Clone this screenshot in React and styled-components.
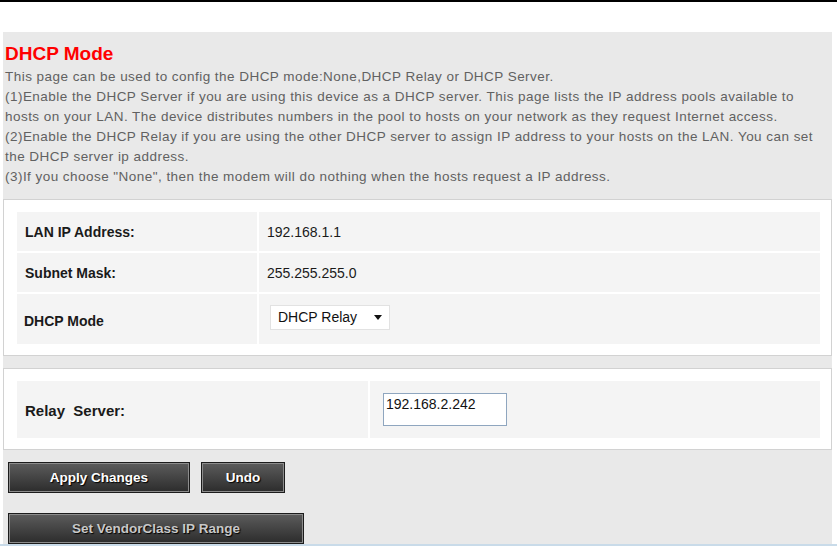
import React from "react";
import styled, { createGlobalStyle } from "styled-components";

const GlobalStyle = createGlobalStyle`
  html, body {
    margin: 0;
    padding: 0;
    background: #fff;
    font-family: "Liberation Sans", Arial, sans-serif;
  }
`;

const Page = styled.div`
  width: 837px;
  height: 546px;
  overflow: hidden;
  border-top: 2px solid #000;
  box-sizing: border-box;
  padding-top: 30px;
  display: flex;
  flex-direction: column;
`;

const Panel = styled.div`
  flex: 1;
  margin-left: 3px;
  width: 829px;
  background: #e9e9e9;
  padding-top: 11px;
  box-sizing: border-box;
`;

const Title = styled.h1`
  margin: 0 0 2px 2px;
  font-size: 19px;
  line-height: 22px;
  font-weight: bold;
  color: #ff0000;
`;

const Description = styled.div`
  margin-left: 2px;
  font-size: 13.5px;
  letter-spacing: 0.46px;
  line-height: 20px;
  color: #616161;
`;

const Box = styled.div`
  margin-top: 12px;
  background: #fff;
  border: 1px solid #d2d2d2;
  padding: 12px 11px 11px 13px;
`;

const Grid = styled.div`
  display: grid;
  grid-template-columns: ${(p) => p.$label}px 1fr;
  gap: 2px;
`;

const Cell = styled.div`
  background: #f4f4f4;
  height: ${(p) => p.$h}px;
  display: flex;
  align-items: center;
  box-sizing: border-box;
  padding-left: ${(p) => p.$pad}px;
  padding-top: ${(p) => p.$shift || 0}px;
  padding-bottom: ${(p) => p.$lift || 0}px;
  font-size: ${(p) => (p.$big ? 15 : 14)}px;
  font-weight: ${(p) => (p.$bold ? "bold" : "normal")};
  color: #1a1a1a;
`;

const Select = styled.div`
  width: 120px;
  height: 25px;
  box-sizing: border-box;
  background: #fff;
  border: 1px solid #e2e2e2;
  display: flex;
  align-items: center;
  justify-content: space-between;
  padding: 0 7px 0 7px;
  font-size: 14px;
  color: #111;
`;

const Arrow = styled.span`
  width: 0;
  height: 0;
  border-left: 4px solid transparent;
  border-right: 4px solid transparent;
  border-top: 5px solid #111;
`;

const TextInput = styled.input`
  width: 124px;
  height: 33px;
  box-sizing: border-box;
  border: 1px solid #8fa6bf;
  padding: 0 2px 12px 2px;
  font-family: "Liberation Sans", Arial, sans-serif;
  font-size: 14px;
  color: #111;
  outline: none;
`;

const ButtonRow = styled.div`
  display: flex;
  gap: 11px;
  margin: ${(p) => p.$top}px 0 0 5px;
`;

const Button = styled.button`
  width: ${(p) => p.$w}px;
  height: 31px;
  border: 1px solid #1c1c1c;
  box-shadow: inset 0 0 0 1px #8c8c8c;
  background: linear-gradient(#5c5c5c, #2c2c2c);
  color: ${(p) => (p.$dim ? "#c8c8c8" : "#fff")};
  font-family: "Liberation Sans", Arial, sans-serif;
  font-size: 13.5px;
  font-weight: bold;
  text-shadow: 1px 1px 1px #000;
  padding: 0 0 1px;
  cursor: pointer;
`;

const BottomLine = styled.div`
  height: 3px;
  background: #c9dbe9;
`;

export default function App() {
  return (
    <>
      <GlobalStyle />
      <Page>
        <Panel>
          <Title>DHCP Mode</Title>
          <Description>
            This page can be used to config the DHCP mode:None,DHCP Relay or DHCP Server.
            <br />
            (1)Enable the DHCP Server if you are using this device as a DHCP server. This page lists the IP address pools available to
            <br />
            hosts on your LAN. The device distributes numbers in the pool to hosts on your network as they request Internet access.
            <br />
            (2)Enable the DHCP Relay if you are using the other DHCP server to assign IP address to your hosts on the LAN. You can set
            <br />
            the DHCP server ip address.
            <br />
            (3)If you choose "None", then the modem will do nothing when the hosts request a IP address.
          </Description>

          <Box>
            <Grid $label={240}>
              <Cell $h={39} $pad={8} $bold>LAN IP Address:</Cell>
              <Cell $h={39} $pad={8}>192.168.1.1</Cell>
              <Cell $h={39} $pad={8} $bold>Subnet Mask:</Cell>
              <Cell $h={39} $pad={8}>255.255.255.0</Cell>
              <Cell $h={50} $pad={7} $shift={3} $bold>DHCP Mode</Cell>
              <Cell $h={50} $pad={11} $lift={4}>
                <Select>
                  DHCP Relay
                  <Arrow />
                </Select>
              </Cell>
            </Grid>
          </Box>

          <Box>
            <Grid $label={351}>
              <Cell $h={57} $pad={8} $shift={2} $big $bold>Relay&nbsp; Server:</Cell>
              <Cell $h={57} $pad={13}>
                <TextInput defaultValue="192.168.2.242" />
              </Cell>
            </Grid>
          </Box>

          <ButtonRow $top={12}>
            <Button $w={182}>Apply Changes</Button>
            <Button $w={84}>Undo</Button>
          </ButtonRow>
          <ButtonRow $top={20}>
            <Button $w={296} $dim>Set VendorClass IP Range</Button>
          </ButtonRow>
        </Panel>
        <BottomLine />
      </Page>
    </>
  );
}
